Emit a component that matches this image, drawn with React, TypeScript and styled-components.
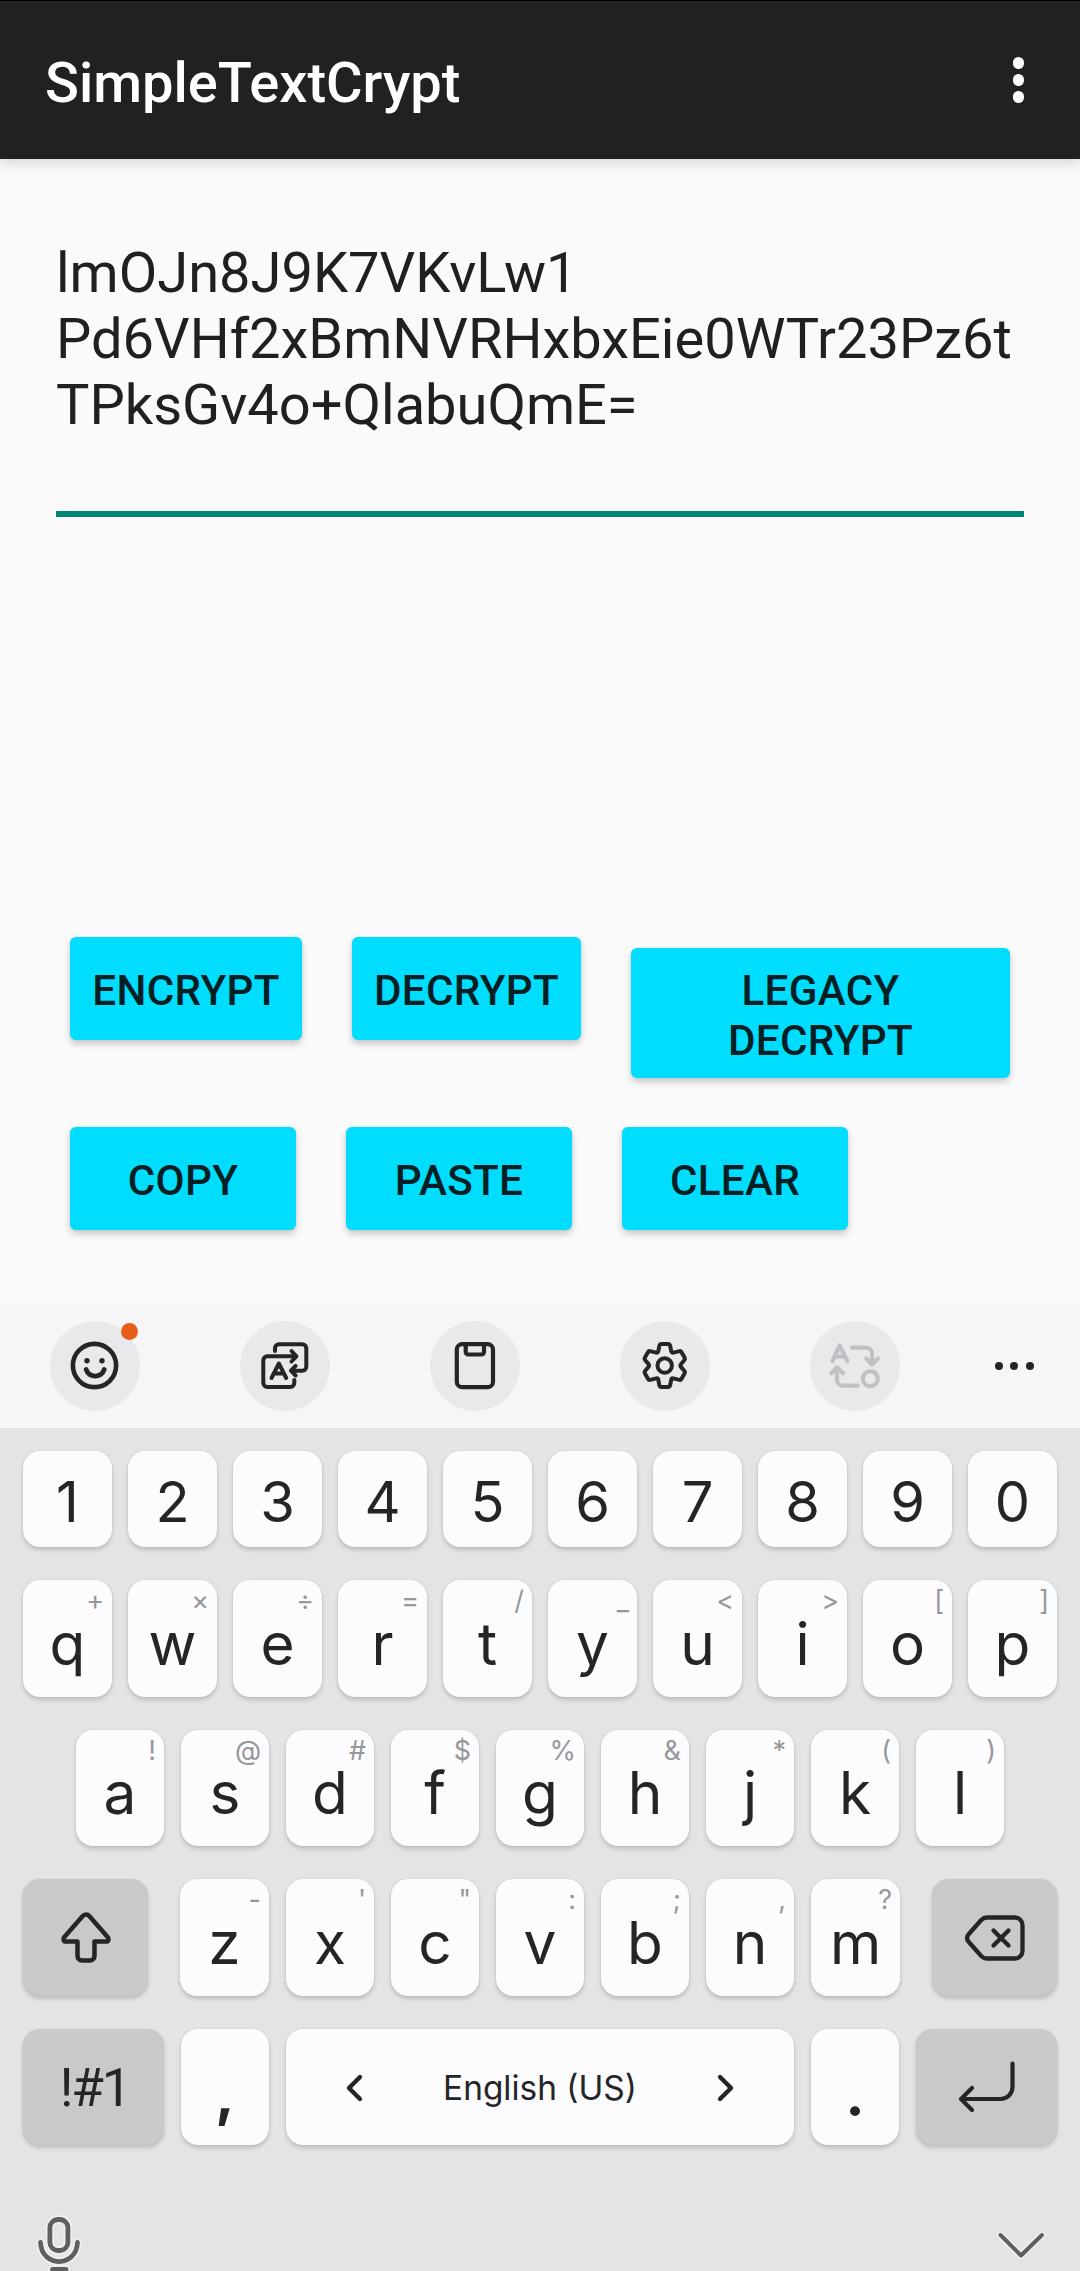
import React from "react";
import styled, { createGlobalStyle, css } from "styled-components";

const GlobalStyle = createGlobalStyle`
  * { box-sizing: border-box; }
  html, body { margin: 0; padding: 0; background: #fafafa; }
  body { width: 1080px; height: 2271px; overflow: hidden; }
  button { border: 0; padding: 0; margin: 0; font: inherit; color: inherit; }
`;

const Screen = styled.div`
  display: flex;
  flex-direction: column;
  width: 1080px;
  height: 2271px;
  overflow: hidden;
  background: #fafafa;
  font-family: Roboto, sans-serif;
`;

const AppBar = styled.header`
  flex: none;
  display: flex;
  align-items: center;
  justify-content: space-between;
  height: 159px;
  padding: 5px 56px 0 45px;
  border-top: 1px solid #000;
  background: #212121;
  box-shadow: 0 4px 14px rgba(0, 0, 0, 0.15);
`;

const Title = styled.h1`
  margin: 0;
  color: #fff;
  font-size: 56px;
  font-weight: 500;
  line-height: 66px;
`;

const Overflow = styled.button`
  display: flex;
  flex-direction: column;
  gap: 5.6px;
  margin-top: -5px;
  background: none;
`;

const OverflowDot = styled.span`
  width: 11.4px;
  height: 11.4px;
  border-radius: 50%;
  background: #fff;
`;

const Content = styled.main`
  display: flex;
  flex-direction: column;
  height: 1146px;
  padding: 81px 56px 0;
`;

const TextField = styled.div`
  height: 277px;
  border-bottom: 6px solid #018577;
  color: #202020;
  font-size: 56px;
  line-height: 66px;
  white-space: pre-wrap;
  word-break: break-all;
`;

const Actions = styled.div`
  display: flex;
  flex-direction: column;
  gap: 49px;
  margin-top: 420px;
  padding: 0 14px;
`;

const ActionRow = styled.div`
  display: flex;
  align-items: flex-start;
  gap: 50px;
`;

const ActionButton = styled.button<{ $width: number; $tall?: boolean }>`
  width: ${(p) => p.$width}px;
  height: ${(p) => (p.$tall ? 130 : 103)}px;
  margin-top: ${(p) => (p.$tall ? 11 : 0)}px;
  padding: ${(p) => (p.$tall ? "5px 60px 0" : "5px 0 0")};
  border-radius: 6px;
  background: #00ddff;
  box-shadow: 0 4px 7px rgba(0, 0, 0, 0.2), 0 0 3px rgba(0, 0, 0, 0.08);
  color: #021f24;
  font-size: 42.19px;
  font-weight: 500;
  letter-spacing: 0.3px;
  line-height: 50px;
  text-align: center;
`;

const Keyboard = styled.section`
  flex: none;
  height: 966px;
  background: #e4e4e6;
  color: #252527;
  font-family: Inter, sans-serif;
`;

const Toolbar = styled.div`
  display: flex;
  align-items: center;
  gap: 100px;
  height: 123px;
  padding: 0 50px 1px;
  background: #f6f6f8;
`;

const Tool = styled.button<{ $muted?: boolean }>`
  position: relative;
  display: flex;
  align-items: center;
  justify-content: center;
  flex: none;
  width: 90px;
  height: 90px;
  border-radius: 50%;
  background: #e9e9eb;
  color: ${(p) => (p.$muted ? "#c1c1c5" : "#252527")};
`;

const Badge = styled.span`
  position: absolute;
  top: 2px;
  right: 2px;
  width: 17px;
  height: 17px;
  border-radius: 50%;
  background: #e65d19;
`;

const More = styled.button`
  display: flex;
  gap: 7.3px;
  margin-left: -5px;
  background: none;
`;

const MoreDot = styled.span`
  width: 8px;
  height: 8px;
  border-radius: 50%;
  background: #252527;
`;

const KeyRows = styled.div`
  display: flex;
  flex-direction: column;
  padding: 23px 23px 0;
`;

const KeyRow = styled.div<{ $indent?: number; $gap: number; $space: number }>`
  display: flex;
  gap: ${(p) => p.$gap}px;
  padding: 0 ${(p) => p.$indent ?? 0}px;
  margin-bottom: ${(p) => p.$space}px;
`;

const Letters = styled.div`
  display: flex;
  gap: 17px;
`;

const Key = styled.button<{ $width: number; $height: number; $dark?: boolean }>`
  position: relative;
  display: flex;
  align-items: center;
  justify-content: center;
  flex: none;
  width: ${(p) => p.$width}px;
  height: ${(p) => p.$height}px;
  border-radius: 17px;
  background: ${(p) => (p.$dark ? "#c9c9cb" : "#fcfcfe")};
  box-shadow: 0 3px 4px rgba(0, 0, 0, 0.16), 0 0 2px rgba(0, 0, 0, 0.1);
`;

const Glyph = styled.span<{ $kind?: "digit" | "punct" }>`
  font-size: 58.5px;
  line-height: 60px;
  padding-top: 10px;
  ${(p) =>
    p.$kind === "digit" &&
    css`
      font-size: 56px;
      padding-top: 5px;
    `}
  ${(p) =>
    p.$kind === "punct" &&
    css`
      font-weight: 700;
      padding-top: 14px;
    `}
`;

const Hint = styled.span`
  position: absolute;
  top: 5px;
  right: 8px;
  color: #97979a;
  font-size: 27px;
  line-height: 32px;
`;

const SymbolLabel = styled.span`
  font-family: Roboto, sans-serif;
  font-size: 53px;
  letter-spacing: -2.2px;
  line-height: 60px;
  padding: 2px 0 0 2px;
`;

const Space = styled(Key)`
  justify-content: space-between;
  padding: 1px 60px 0;
  font-size: 33.4px;
  line-height: 40px;
`;

const NavBar = styled.div`
  display: flex;
  justify-content: space-between;
  padding: 0 34px 0 36px;
`;

const Svg = styled.svg<{ $w: number; $h: number; $drop?: number }>`
  display: block;
  flex: none;
  width: ${(p) => p.$w}px;
  height: ${(p) => p.$h}px;
  margin-top: ${(p) => p.$drop ?? 0}px;
  overflow: visible;
  fill: none;
  stroke: currentColor;
  stroke-linecap: round;
  stroke-linejoin: round;
`;

const SmileIcon = () => (
  <Svg $w={48} $h={48} viewBox="0 0 48 48" strokeWidth={4.6}>
    <circle cx="23.5" cy="23.5" r="21.6" />
    <path d="M15.2 27.5c2.6 8.700 15.400 8.700 18 0" strokeWidth={4.8} />
    <circle cx="16" cy="18.700" r="2.700" fill="currentColor" stroke="none" />
    <circle cx="31" cy="18.700" r="2.700" fill="currentColor" stroke="none" />
  </Svg>
);

const TranslateIcon = () => (
  <Svg $w={48} $h={48} viewBox="0 0 48 48" strokeWidth={4}>
    <path d="M14 9V6.300a4 4 0 0 1 4-4h23.300a4 4 0 0 1 4 4v18.400a4 4 0 0 1-4 4H30.500" />
    <path d="m34.600 23.900-4.600 4.800 4.600 4.800" />
    <path d="M35 14.300H6.300a4 4 0 0 0-4 4V41a4 4 0 0 0 4 4h23a4 4 0 0 0 4-4v-3" />
    <path d="m30.500 9 4.900 5.300-4.900 5.200" />
    <path d="m10.500 36 7.400-14.500 7.300 14.500M13.500 31.600h8.800" />
  </Svg>
);

const ClipboardIcon = () => (
  <Svg $w={42} $h={48} viewBox="0 0 42 48" strokeWidth={4.2}>
    <rect x="2.800" y="2.200" width="36.200" height="43" rx="5.500" />
    <path d="M11.700 2.500v7.500a2.500 2.500 0 0 0 2.500 2.500h13.300a2.500 2.500 0 0 0 2.500-2.500V2.500" />
  </Svg>
);

const GearIcon = () => (
  <Svg $w={48} $h={48} viewBox="0 0 48 48" strokeWidth={4}>
    <path d="M20 2h7.500c.8 0 1.300.5 1.500 1.200l1.200 6c.2 1 1 1.600 2 1.400l6.300-1.500c.8-.2 1.500.1 1.900.8l3.300 5.800c.5.8.4 1.600-.2 2.300l-3.200 3.700c-.9 1-.9 2.600 0 3.600l3.200 3.700c.6.700.7 1.500.2 2.300l-3.300 5.800c-.4.7-1.100 1-1.900.8l-6.300-1.500c-1-.2-1.800.4-2 1.400l-1.200 6c-.2.700-.7 1.200-1.500 1.200H20c-.8 0-1.300-.5-1.500-1.200l-1.200-6c-.2-1-1-1.600-2-1.400L9 37.900c-.8.2-1.500-.1-1.900-.8l-3.300-5.800c-.5-.8-.4-1.600.2-2.300l3.200-3.700c.9-1 .9-2.600 0-3.600L4 18c-.6-.7-.7-1.500-.2-2.300l3.300-5.800c.4-.7 1.100-1 1.900-.8l6.300 1.500c1 .2 1.800-.4 2-1.400l1.200-6C18.700 2.500 19.200 2 20 2z" />
    <circle cx="23.700" cy="23.500" r="7.200" />
  </Svg>
);

const SwapIcon = () => (
  <Svg $w={50} $h={46} viewBox="0 0 50 46" strokeWidth={4.2}>
    <path d="m2.500 18 7.200-15.500L17.300 18M5.500 13.600h8.500" />
    <path d="M22 4.700h14a6 6 0 0 1 6 6v11M36.300 15.500l5.700 6 6-6" />
    <path d="M27.700 42.700H13a6 6 0 0 1-6-6V25M1.200 30.300l5.800-6 6 6" />
    <circle cx="40.300" cy="35.700" r="7.500" />
  </Svg>
);

const ShiftIcon = () => (
  <Svg $w={50} $h={51} viewBox="0 0 50 51" strokeWidth={4.5}>
    <path d="M21.500 4.200 3.200 25.200c-1.500 2-.8 4.300 1.800 4.300h11.500v14.500a4.500 4.500 0 0 0 4.500 4.500h8a4.500 4.500 0 0 0 4.500-4.500V29.500H45c2.600 0 3.300-2.300 1.800-4.300L28.500 4.200c-2-2.300-5-2.300-7 0z" />
  </Svg>
);

const BackspaceIcon = () => (
  <Svg $w={60} $h={46} viewBox="0 0 60 46" strokeWidth={4.3}>
    <path d="M21.500 2.500H50a7.500 7.500 0 0 1 7.500 7.500v26a7.500 7.500 0 0 1-7.500 7.500H21.500c-2 0-3.600-.8-5-2.200L3.800 27c-2.200-2.500-2.200-5.500 0-8L16.500 4.700c1.400-1.400 3-2.200 5-2.200z" />
    <path d="m28.500 15.500 15 15M43.500 15.500l-15 15" />
  </Svg>
);

const EnterIcon = () => (
  <Svg $w={57} $h={52} viewBox="0 0 57 52" strokeWidth={4.2}>
    <path d="M54.500 2.500V26a12 12 0 0 1-12 12H3M14 27 3 38 14 49" />
  </Svg>
);

const Arrow = ({ flip }: { flip?: boolean }) => (
  <Svg $w={17} $h={28} viewBox="0 0 17 28" strokeWidth={4.4}>
    <path d={flip ? "m3 3 11 11L3 25" : "M14 3 3 14l11 11"} />
  </Svg>
);

const MicIcon = () => (
  <Svg $w={46} $h={58} viewBox="0 0 46 58">
    {[
      { stroke: "#efeff0", width: 8.4 },
      { stroke: "#5f5f5f", width: 4.8 },
    ].map((layer) => (
      <g key={layer.stroke} stroke={layer.stroke} strokeWidth={layer.width}>
        <rect x="13.900" y="4.500" width="18" height="31" rx="8" />
        <path d="M4.500 27.500c1.200 25.500 35.800 25.500 37 0M16.500 54.500h13.500" />
      </g>
    ))}
  </Svg>
);

const HideIcon = () => (
  <Svg $w={50} $h={30} $drop={16} viewBox="0 0 50 30">
    <path stroke="#efeff0" strokeWidth={7.5} d="m4.500 4 20.500 20.500L46 4" />
    <path stroke="#5f5f5f" strokeWidth={3.9} d="m4.500 4 20.500 20.500L46 4" />
  </Svg>
);

type Pair = [string, string];

const digits = ["1", "2", "3", "4", "5", "6", "7", "8", "9", "0"];
const topRow: Pair[] = [
  ["q", "+"], ["w", "×"], ["e", "÷"], ["r", "="], ["t", "/"],
  ["y", "_"], ["u", "<"], ["i", ">"], ["o", "["], ["p", "]"],
];
const homeRow: Pair[] = [
  ["a", "!"], ["s", "@"], ["d", "#"], ["f", "$"], ["g", "%"],
  ["h", "&"], ["j", "*"], ["k", "("], ["l", ")"],
];
const bottomRow: Pair[] = [
  ["z", "-"], ["x", "'"], ["c", '"'], ["v", ":"], ["b", ";"], ["n", ","], ["m", "?"],
];

const LetterKey = ({ pair, width, height }: { pair: Pair; width: number; height: number }) => (
  <Key $width={width} $height={height}>
    <Glyph>{pair[0]}</Glyph>
    <Hint>{pair[1]}</Hint>
  </Key>
);

export default function App() {
  return (
    <Screen>
      <GlobalStyle />
      <AppBar>
        <Title>SimpleTextCrypt</Title>
        <Overflow aria-label="More options">
          <OverflowDot />
          <OverflowDot />
          <OverflowDot />
        </Overflow>
      </AppBar>
      <Content>
        <TextField>{"lmOJn8J9K7VKvLw1\nPd6VHf2xBmNVRHxbxEie0WTr23Pz6t\nTPksGv4o+QlabuQmE="}</TextField>
        <Actions>
          <ActionRow>
            <ActionButton $width={232}>ENCRYPT</ActionButton>
            <ActionButton $width={229}>DECRYPT</ActionButton>
            <ActionButton $width={379} $tall>LEGACY DECRYPT</ActionButton>
          </ActionRow>
          <ActionRow>
            <ActionButton $width={226}>COPY</ActionButton>
            <ActionButton $width={226}>PASTE</ActionButton>
            <ActionButton $width={226}>CLEAR</ActionButton>
          </ActionRow>
        </Actions>
      </Content>
      <Keyboard>
        <Toolbar>
          <Tool aria-label="Emoji"><SmileIcon /><Badge /></Tool>
          <Tool aria-label="Translate"><TranslateIcon /></Tool>
          <Tool aria-label="Clipboard"><ClipboardIcon /></Tool>
          <Tool aria-label="Settings"><GearIcon /></Tool>
          <Tool aria-label="Convert text" $muted><SwapIcon /></Tool>
          <More aria-label="More"><MoreDot /><MoreDot /><MoreDot /></More>
        </Toolbar>
        <KeyRows>
          <KeyRow $gap={16} $space={33}>
            {digits.map((d) => (
              <Key key={d} $width={89} $height={96}><Glyph $kind="digit">{d}</Glyph></Key>
            ))}
          </KeyRow>
          <KeyRow $gap={16} $space={33}>
            {topRow.map((p) => <LetterKey key={p[0]} pair={p} width={89} height={117} />)}
          </KeyRow>
          <KeyRow $gap={17} $indent={53} $space={33}>
            {homeRow.map((p) => <LetterKey key={p[0]} pair={p} width={88} height={116} />)}
          </KeyRow>
          <KeyRow $gap={32} $space={33}>
            <Key $width={125} $height={117} $dark aria-label="Shift"><ShiftIcon /></Key>
            <Letters>
              {bottomRow.map((p, i) => (
                <LetterKey key={p[0]} pair={p} width={i === 0 || i === 6 ? 89 : 88} height={117} />
              ))}
            </Letters>
            <Key $width={125} $height={117} $dark aria-label="Backspace"><BackspaceIcon /></Key>
          </KeyRow>
          <KeyRow $gap={17} $space={70}>
            <Key $width={141} $height={116} $dark><SymbolLabel>!#1</SymbolLabel></Key>
            <Key $width={88} $height={116}><Glyph $kind="punct">,</Glyph></Key>
            <Space $width={508} $height={116}>
              <Arrow />
              <span>English (US)</span>
              <Arrow flip />
            </Space>
            <Key $width={88} $height={116}><Glyph $kind="punct">.</Glyph></Key>
            <Key $width={141} $height={116} $dark aria-label="Enter"><EnterIcon /></Key>
          </KeyRow>
        </KeyRows>
        <NavBar>
          <MicIcon />
          <HideIcon />
        </NavBar>
      </Keyboard>
    </Screen>
  );
}
